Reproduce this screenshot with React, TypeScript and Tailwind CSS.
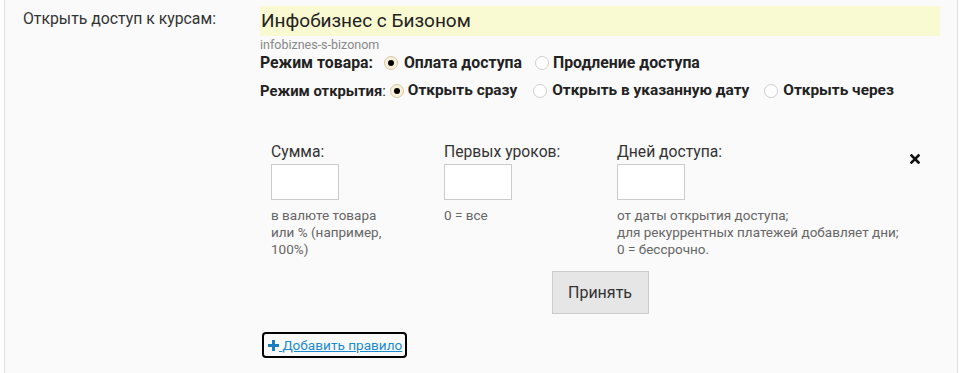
import React from "react";

function Radio({ checked }: { checked?: boolean }) {
  return checked ? (
    <span className="inline-flex items-center justify-center w-[14px] h-[14px] rounded-full border border-[#d8c9a3] bg-[#f7efd8] shrink-0">
      <span className="w-[6px] h-[6px] rounded-full bg-black" />
    </span>
  ) : (
    <span className="inline-block w-[14px] h-[14px] rounded-full border border-[#cfcfcf] bg-white shrink-0" />
  );
}

export default function App() {
  return (
    <div className="w-[962px] h-[373px] bg-white font-['Roboto','Liberation_Sans',sans-serif] text-[#333] overflow-hidden">
      <div className="ml-[4px] w-[954px] h-full border-x border-[#e0e0e0] bg-[#fafafa] flex">
        <div className="w-[255px] pl-[18px] pt-[10px] text-[15.8px] leading-[18px] shrink-0">
          Открыть доступ к курсам:
        </div>
        <div className="w-[680px] pt-[6px] shrink-0">
          <div className="h-[30px] bg-[#fafad2] text-[19px] leading-[30px] pl-[1px] text-[#222]">
            Инфобизнес с Бизоном
          </div>
          <div className="text-[12.5px] leading-[14px] text-[#888] mt-[2px]">infobiznes-s-bizonom</div>
          <div className="flex items-center h-[22px] text-[15.8px] font-bold text-[#222]">
            <span>Режим товара:</span>
            <span className="ml-[11px] flex items-center gap-[6px]">
              <Radio checked />
              <span>Оплата доступа</span>
            </span>
            <span className="ml-[13px] flex items-center gap-[4px]">
              <Radio />
              <span>Продление доступа</span>
            </span>
          </div>
          <div className="flex items-center h-[22px] mt-[6px] text-[15.4px] text-[#222]">
            <span className="font-bold text-[14.8px]">Режим открытия</span>
            <span className="text-[14.8px]">:</span>
            <span className="ml-[4px] flex items-center gap-[4px] font-bold">
              <Radio checked />
              <span>Открыть сразу</span>
            </span>
            <span className="ml-[16px] flex items-center gap-[5px] font-bold">
              <Radio />
              <span>Открыть в указанную дату</span>
            </span>
            <span className="ml-[15px] flex items-center gap-[5px] font-bold">
              <Radio />
              <span>Открыть через</span>
            </span>
          </div>

          <div className="flex mt-[41px] pl-[11px]">
            <div className="w-[173px] shrink-0">
              <div className="text-[15.7px] leading-[18px]">Сумма:</div>
              <div className="mt-[3px] w-[68px] h-[36px] bg-white border border-[#ccc]" />
              <div className="mt-[7px] w-[128px] text-[13.5px] leading-[17px] text-[#666]">
                в валюте товара или % (например, 100%)
              </div>
            </div>
            <div className="w-[173px] shrink-0">
              <div className="text-[15.7px] leading-[18px]">Первых уроков:</div>
              <div className="mt-[3px] w-[68px] h-[36px] bg-white border border-[#ccc]" />
              <div className="mt-[7px] text-[13.5px] leading-[17px] text-[#666]">0 = все</div>
            </div>
            <div className="flex-1">
              <div className="text-[15.7px] leading-[18px]">Дней доступа:</div>
              <div className="mt-[3px] w-[68px] h-[36px] bg-white border border-[#ccc]" />
              <div className="mt-[7px] text-[13.5px] leading-[17px] text-[#666]">
                от даты открытия доступа;
                <br />
                для рекуррентных платежей добавляет дни;
                <br />
                0 = бессрочно.
              </div>
            </div>
            <div className="mr-[20px] mt-[11px] w-[10px] h-[10px] shrink-0">
              <svg width="10" height="10" viewBox="0 0 10 10">
                <path d="M1.5 1.5 L8.5 8.5 M8.5 1.5 L1.5 8.5" stroke="#111" strokeWidth="2.6" strokeLinecap="square" />
              </svg>
            </div>
          </div>

          <div className="flex justify-center mt-[13px]">
            <button className="w-[97px] h-[43px] bg-[#e6e6e6] border border-[#ccc] text-[16px] text-[#333]">
              Принять
            </button>
          </div>

          <div className="mt-[18px] ml-[2px]">
            <a
              href="#"
              className="inline-block whitespace-nowrap h-[26px] leading-[22px] pl-[4px] pr-[3px] border-2 border-black rounded-[4px] text-[13.6px] text-[#1b8bd0] underline"
            >
              <svg width="11" height="11" viewBox="0 0 11 11" className="inline-block align-[-1px]">
                <path d="M5.5 0 V11 M0 5.5 H11" stroke="#1a7fc0" strokeWidth="3" />
              </svg>{" "}
              Добавить правило
            </a>
          </div>
        </div>
      </div>
    </div>
  );
}
